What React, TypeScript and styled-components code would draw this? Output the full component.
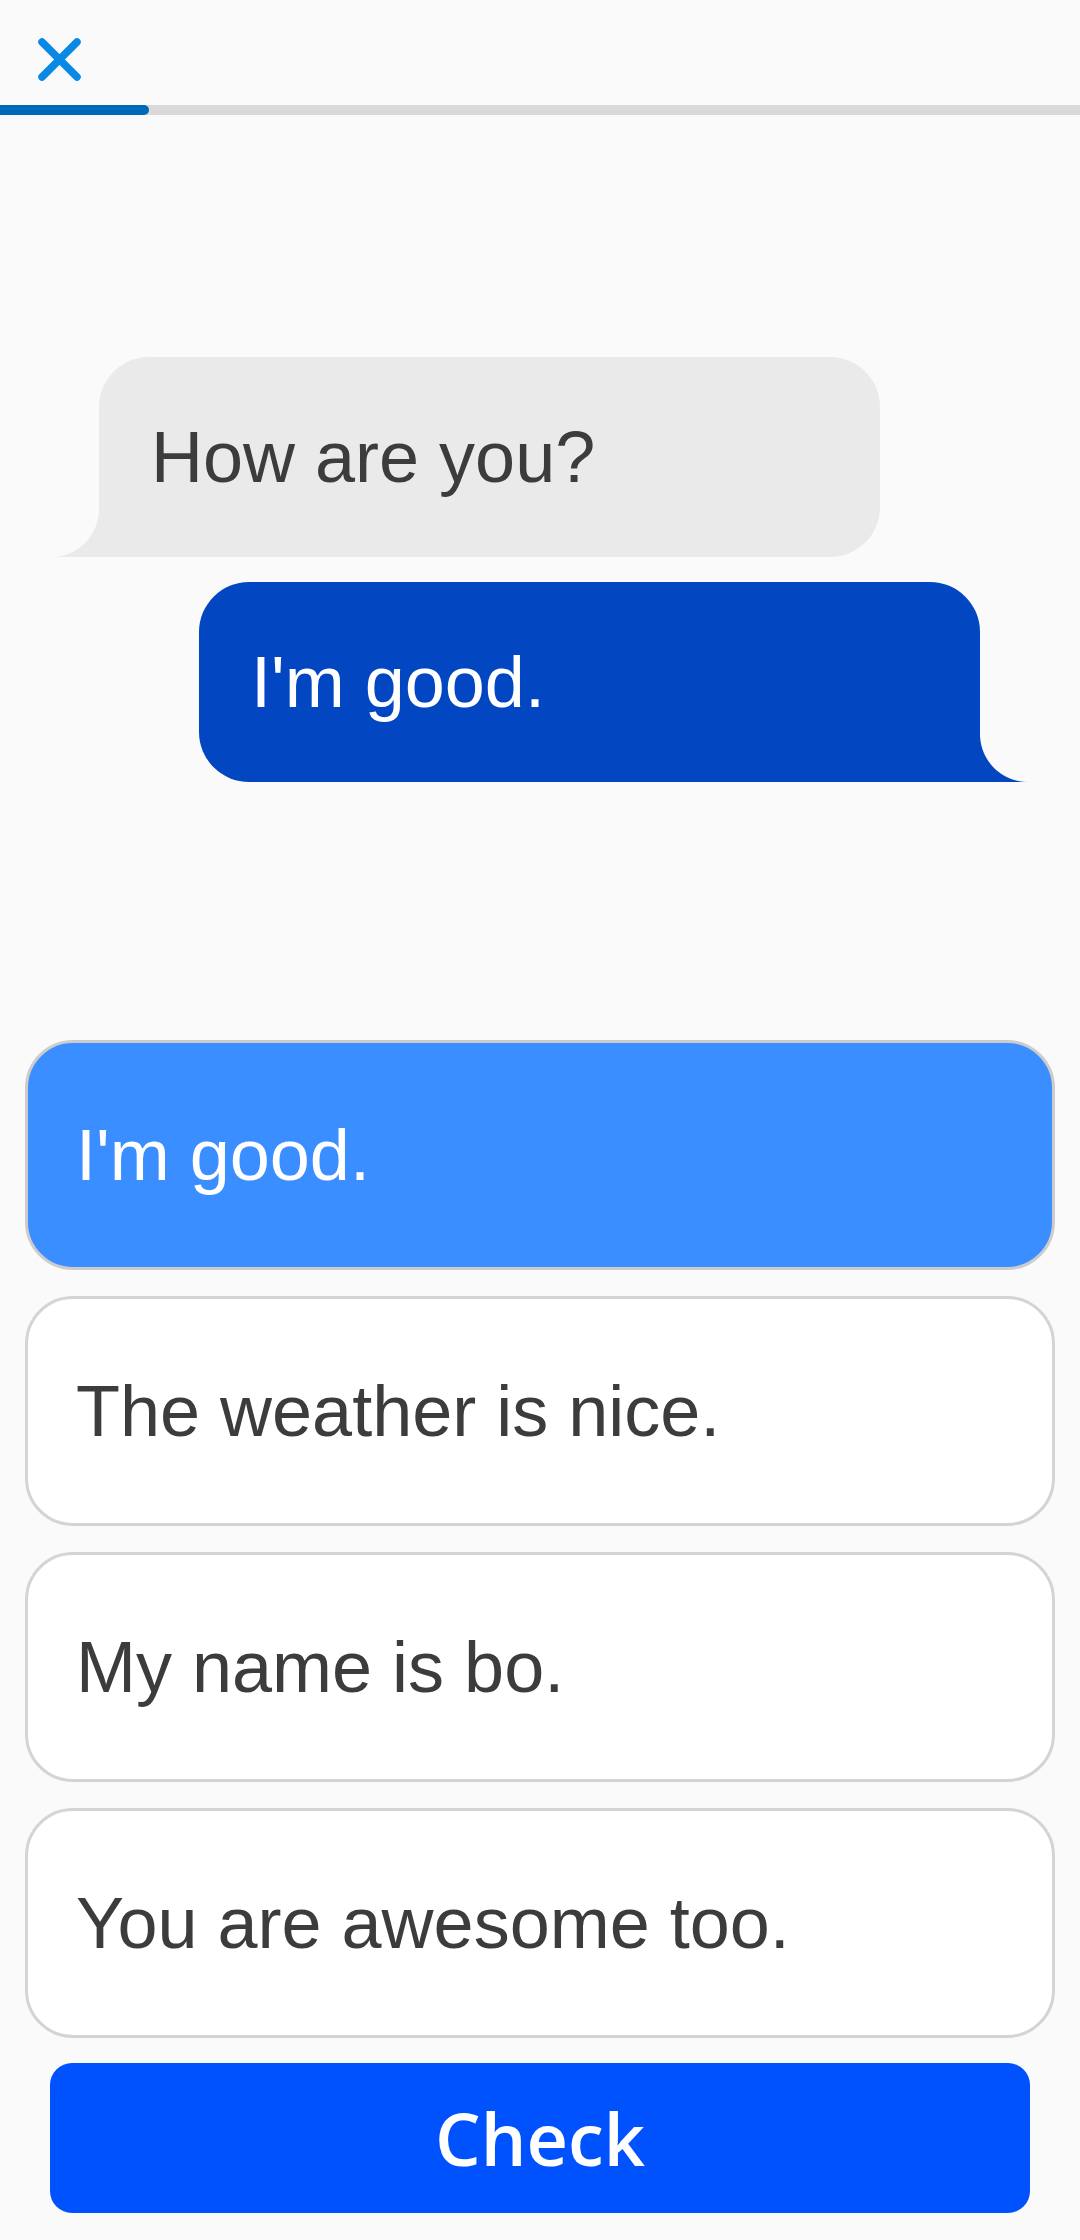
import React from "react";
import styled, { createGlobalStyle } from "styled-components";

const GlobalStyle = createGlobalStyle`
  html, body {
    margin: 0;
    padding: 0;
    background: #fafafa;
  }
  * { box-sizing: border-box; }
`;

const Page = styled.div`
  width: 1080px;
  height: 2240px;
  display: flex;
  flex-direction: column;
  background: #fafafa;
  font-family: "Liberation Sans", Arial, sans-serif;
  overflow: hidden;
`;

const TopBar = styled.div`
  height: 105px;
  padding: 36px 0 0 36px;
  display: flex;
  align-items: flex-start;
`;

const CloseButton = styled.button`
  width: 48px;
  height: 48px;
  padding: 0;
  border: none;
  background: transparent;
  display: flex;
  cursor: pointer;
`;

const Track = styled.div`
  height: 10px;
  background: #d9d9d9;
  display: flex;
`;

const Fill = styled.div`
  height: 100%;
  background: #0068b8;
  border-radius: 0 5px 5px 0;
`;

const Chat = styled.div`
  display: flex;
  flex-direction: column;
  gap: 25px;
  padding-top: 242px;
`;

const Bubble = styled.div<{ $mine?: boolean }>`
  position: relative;
  width: 781px;
  height: 200px;
  margin-left: ${(p) => (p.$mine ? "199px" : "99px")};
  padding-left: 52px;
  display: flex;
  align-items: center;
  font-size: 72px;
  color: ${(p) => (p.$mine ? "#ffffff" : "#3c3c3c")};
  background: ${(p) => (p.$mine ? "#0246c2" : "#eaeaea")};
  border-radius: ${(p) => (p.$mine ? "50px 50px 0 50px" : "50px 50px 50px 0")};

  &::after {
    content: "";
    position: absolute;
    bottom: 0;
    width: 48px;
    height: 48px;
    ${(p) => (p.$mine ? "right: -48px;" : "left: -48px;")}
    background: radial-gradient(
      circle at ${(p) => (p.$mine ? "100% 0" : "0 0")},
      transparent 47.5px,
      ${(p) => (p.$mine ? "#0246c2" : "#eaeaea")} 48.5px
    );
  }
`;

const Options = styled.div`
  display: flex;
  flex-direction: column;
  gap: 26px;
  margin-top: 258px;
  padding: 0 25px;
`;

const Option = styled.button<{ $selected?: boolean }>`
  height: 230px;
  width: 1030px;
  padding: 0 0 0 48px;
  display: flex;
  align-items: center;
  text-align: left;
  font-family: "Liberation Sans", Arial, sans-serif;
  font-size: 72px;
  color: ${(p) => (p.$selected ? "#ffffff" : "#3c3c3c")};
  background: ${(p) => (p.$selected ? "#3b8eff" : "#ffffff")};
  border: 3px solid ${(p) => (p.$selected ? "#cccccc" : "#d4d4d4")};
  border-radius: 48px;
  cursor: pointer;
`;

const CheckButton = styled.button`
  margin: 25px 50px 0;
  height: 150px;
  width: 980px;
  border: none;
  border-radius: 22px;
  background: #0052ff;
  color: #ffffff;
  font-family: "Open Sans", "Noto Sans", sans-serif;
  font-size: 72px;
  font-weight: 600;
  display: flex;
  align-items: center;
  justify-content: center;
  cursor: pointer;
`;

const options = [
  "I'm good.",
  "The weather is nice.",
  "My name is bo.",
  "You are awesome too.",
];

export default function App() {
  return (
    <Page>
      <GlobalStyle />
      <TopBar>
        <CloseButton aria-label="Close">
          <svg width="48" height="48" viewBox="0 0 48 48">
            <path
              d="M6 6 L41 41 M41 6 L6 41"
              stroke="#0a88e6"
              strokeWidth="7.5"
              strokeLinecap="round"
              fill="none"
            />
          </svg>
        </CloseButton>
      </TopBar>
      <Track>
        <Fill style={{ width: "149px" }} />
      </Track>
      <Chat>
        <Bubble>How are you?</Bubble>
        <Bubble $mine>I'm good.</Bubble>
      </Chat>
      <Options>
        {options.map((o, i) => (
          <Option key={o} $selected={i === 0}>
            {o}
          </Option>
        ))}
      </Options>
      <CheckButton>Check</CheckButton>
    </Page>
  );
}
